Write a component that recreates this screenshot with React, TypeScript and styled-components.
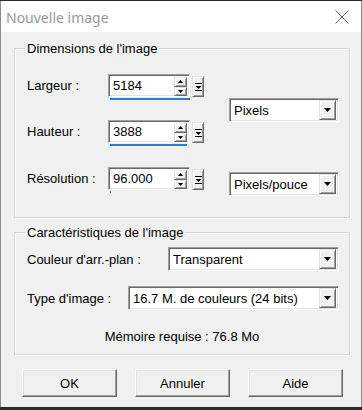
import React from "react";
import styled, { createGlobalStyle } from "styled-components";

const GlobalStyle = createGlobalStyle`
  html, body {
    margin: 0;
    padding: 0;
    background: #2b2b2b;
  }
  body {
    font-family: "Liberation Sans", Arial, sans-serif;
    font-size: 13px;
    color: #000;
  }
`;

const Window = styled.div`
  margin-top: 1px;
  width: 362px;
  height: 406px;
  box-sizing: border-box;
  background: #f0f0f0;
  border-left: 1px solid #8c8c8c;
  border-right: 1px solid #8c8c8c;
  display: flex;
  flex-direction: column;
`;

const TitleBar = styled.div`
  height: 31px;
  flex-shrink: 0;
  background: #fff;
  display: flex;
  align-items: center;
  justify-content: space-between;
  padding: 0 12px 0 5px;
`;

const TitleText = styled.span`
  font-family: "Noto Sans", "Open Sans", sans-serif;
  font-size: 14px;
  color: #999;
  margin-top: 1px;
`;

const Content = styled.div`
  padding: 0 11px 0 13px;
  display: flex;
  flex-direction: column;
`;

const Group = styled.fieldset<{ $top: number; $pt: number; $pb: number }>`
  margin: ${(p) => p.$top}px 0 0 0;
  padding: ${(p) => p.$pt}px 10px ${(p) => p.$pb}px 12px;
  border: 1px solid #d5d5d5;
  box-shadow: inset 1px 1px 0 #fff, 1px 1px 0 #fff;
  min-width: 0;
`;

const Legend = styled.legend`
  margin-left: -2px;
  padding: 0 2px;
  line-height: 15px;
  font-size: 13px;
`;

const DimGrid = styled.div`
  display: grid;
  grid-template-columns: 81px 96px 1fr;
  grid-template-rows: 46px 47px auto;
`;

const Label = styled.div<{ $row?: number }>`
  grid-column: 1;
  grid-row: ${(p) => p.$row ?? "auto"};
  height: 23px;
  display: flex;
  align-items: center;
`;

const SpinField = styled.div<{ $row: number }>`
  grid-column: 2;
  grid-row: ${(p) => p.$row};
  display: flex;
  flex-direction: column;
`;

const SpinLine = styled.div`
  display: flex;
  align-items: flex-start;
  gap: 2px;
`;

const Sunken = styled.div<{ $w: number; $h: number }>`
  width: ${(p) => p.$w}px;
  height: ${(p) => p.$h}px;
  box-sizing: border-box;
  background: #fff;
  border: 1px solid;
  border-color: #a0a0a0 #fff #fff #a0a0a0;
  box-shadow: inset 1px 1px 0 #696969, inset -1px -1px 0 #e3e3e3;
  display: flex;
  align-items: center;
  justify-content: space-between;
  padding: 2px 2px 2px 4px;
`;

const Value = styled.span`
  font-size: 13px;
  line-height: 15px;
  white-space: nowrap;
`;

const SpinButtons = styled.div`
  display: flex;
  flex-direction: column;
  align-self: stretch;
`;

const Raised = styled.div<{ $w: number; $h: number }>`
  width: ${(p) => p.$w}px;
  height: ${(p) => p.$h}px;
  box-sizing: border-box;
  background: #f0f0f0;
  border: 1px solid;
  border-color: #e3e3e3 #696969 #696969 #e3e3e3;
  box-shadow: inset 1px 1px 0 #fff, inset -1px -1px 0 #a0a0a0;
  display: flex;
  align-items: center;
  justify-content: center;
  flex-shrink: 0;
`;

const ValueBar = styled.div`
  height: 2px;
  margin: 1px 0 0 2px;
  background: #2b7cd3;
`;

const SideSelect = styled.div<{ $row: string; $mt: number }>`
  grid-column: 3;
  grid-row: ${(p) => p.$row};
  align-self: start;
  justify-self: end;
  margin-top: ${(p) => p.$mt}px;
`;

const Row = styled.div<{ $mt: number }>`
  display: flex;
  align-items: center;
  justify-content: space-between;
  margin-top: ${(p) => p.$mt}px;
`;

const Memory = styled.div`
  text-align: center;
  margin-top: 19px;
  line-height: 15px;
  padding-right: 2px;
`;

const ButtonBar = styled.div`
  display: flex;
  gap: 18px;
  margin-top: 14px;
  padding-left: 8px;
`;

const DialogButton = styled.button`
  width: 95px;
  height: 28px;
  box-sizing: border-box;
  background: #f0f0f0;
  border: 1px solid;
  border-color: #fff #696969 #696969 #fff;
  box-shadow: inset -1px -1px 0 #a0a0a0, inset 1px 1px 0 #e3e3e3;
  font-family: "Liberation Sans", Arial, sans-serif;
  font-size: 13px;
  color: #000;
  padding: 0;
`;

const Tri = ({ up }: { up?: boolean }) => (
  <svg width="5" height="3" viewBox="0 0 5 3">
    <path d={up ? "M0 3h5L2.5 0z" : "M0 0h5L2.5 3z"} fill="#000" />
  </svg>
);

const DropGlyph = () => (
  <svg width="7" height="4" viewBox="0 0 7 4">
    <path d="M0 0h7L3.5 4z" fill="#000" />
  </svg>
);

const RangeGlyph = () => (
  <svg width="7" height="10" viewBox="0 0 7 10">
    <rect x="0" y="1" width="7" height="1" fill="#000" />
    <path d="M0.5 4h6L3.5 7z" fill="#000" />
    <rect x="0" y="8" width="7" height="1" fill="#000" />
  </svg>
);

const CloseIcon = () => (
  <svg width="14" height="14" viewBox="0 0 14 14">
    <path d="M0.5 0.5L13.5 13.5M13.5 0.5L0.5 13.5" stroke="#6b6b6b" strokeWidth="1" />
  </svg>
);

const SpinInput = ({ row, value, fill }: { row: number; value: string; fill: number }) => (
  <SpinField $row={row}>
    <SpinLine>
      <Sunken $w={82} $h={23}>
        <Value>{value}</Value>
        <SpinButtons>
          <Raised $w={13} $h={9.5}>
            <Tri up />
          </Raised>
          <Raised $w={13} $h={9.5}>
            <Tri />
          </Raised>
        </SpinButtons>
      </Sunken>
      <Raised $w={12} $h={21} style={{ marginTop: 2 }}>
        <RangeGlyph />
      </Raised>
    </SpinLine>
    <ValueBar style={{ width: `${fill}px` }} />
  </SpinField>
);

const Select = ({ w, value }: { w: number; value: string }) => (
  <Sunken $w={w} $h={24}>
    <Value>{value}</Value>
    <Raised $w={17} $h={20}>
      <DropGlyph />
    </Raised>
  </Sunken>
);

const dims = [
  { label: "Largeur :", value: "5184", fill: 80 },
  { label: "Hauteur :", value: "3888", fill: 77 },
  { label: "Résolution :", value: "96.000", fill: 1 },
];

export default function App() {
  return (
    <>
      <GlobalStyle />
      <Window>
        <TitleBar>
          <TitleText>Nouvelle image</TitleText>
          <CloseIcon />
        </TitleBar>
        <Content>
          <Group $top={9} $pt={18} $pb={21}>
            <Legend>Dimensions de l'image</Legend>
            <DimGrid>
              {dims.map((d, i) => (
                <React.Fragment key={d.label}>
                  <Label $row={i + 1}>{d.label}</Label>
                  <SpinInput row={i + 1} value={d.value} fill={d.fill} />
                </React.Fragment>
              ))}
              <SideSelect $row="1 / 3" $mt={24}>
                <Select w={110} value="Pixels" />
              </SideSelect>
              <SideSelect $row="3" $mt={5}>
                <Select w={110} value="Pixels/pouce" />
              </SideSelect>
            </DimGrid>
          </Group>
          <Group $top={7} $pt={7} $pb={10}>
            <Legend>Caractéristiques de l'image</Legend>
            <Row $mt={0}>
              <span>Couleur d'arr.-plan :</span>
              <Select w={171} value="Transparent" />
            </Row>
            <Row $mt={15}>
              <span>Type d'image :</span>
              <Select w={211} value="16.7 M. de couleurs (24 bits)" />
            </Row>
            <Memory>Mémoire requise : 76.8 Mo</Memory>
          </Group>
          <ButtonBar>
            <DialogButton>OK</DialogButton>
            <DialogButton>Annuler</DialogButton>
            <DialogButton>Aide</DialogButton>
          </ButtonBar>
        </Content>
      </Window>
    </>
  );
}
